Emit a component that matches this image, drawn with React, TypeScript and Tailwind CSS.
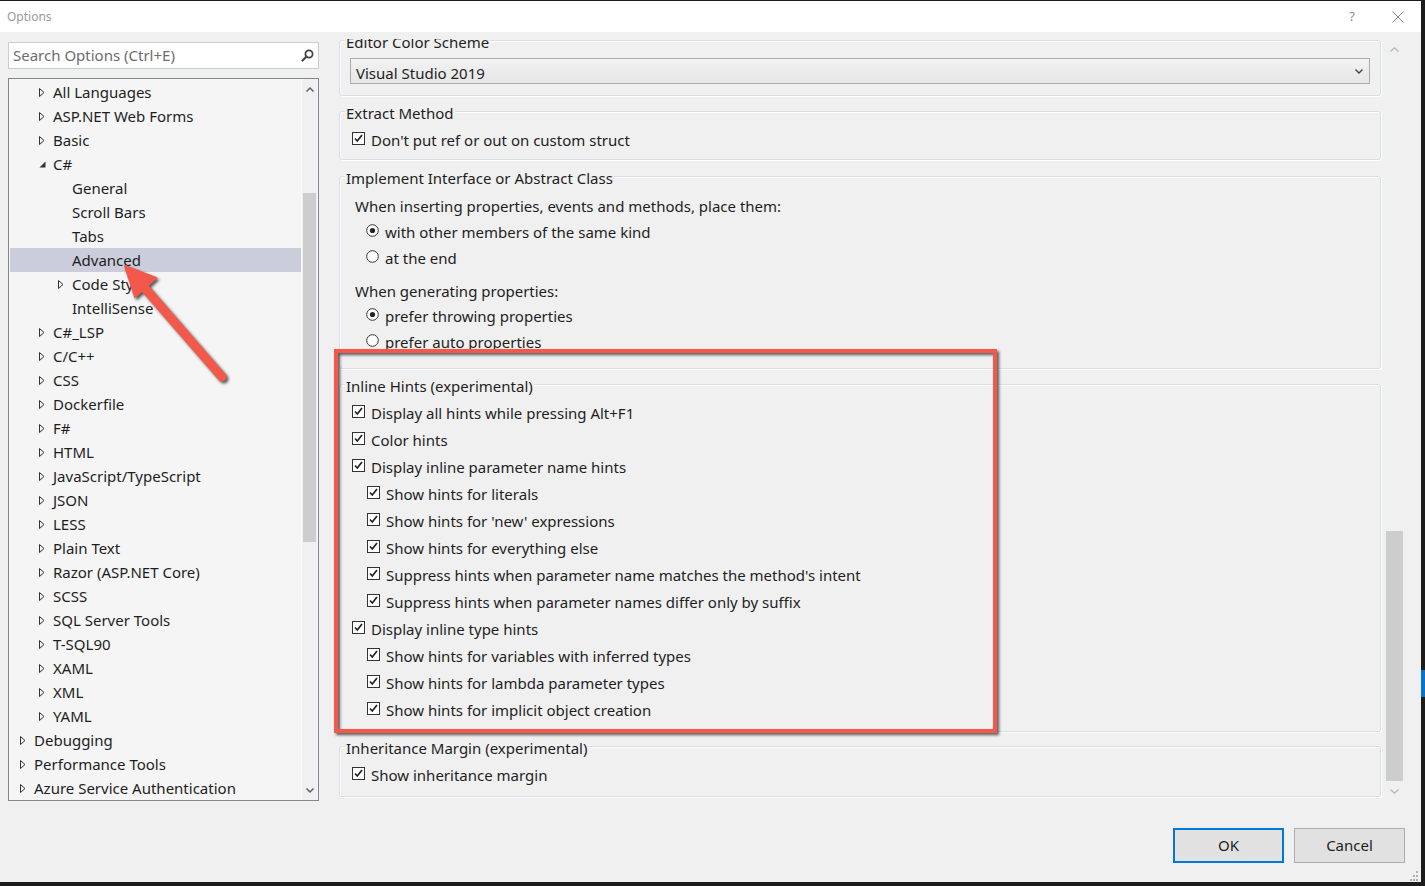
import React from "react";

type Arrow = "c" | "o" | null;

const tree: [string, number, Arrow][] = [
  ["All Languages", 1, "c"],
  ["ASP.NET Web Forms", 1, "c"],
  ["Basic", 1, "c"],
  ["C#", 1, "o"],
  ["General", 2, null],
  ["Scroll Bars", 2, null],
  ["Tabs", 2, null],
  ["Advanced", 2, null],
  ["Code Style", 2, "c"],
  ["IntelliSense", 2, null],
  ["C#_LSP", 1, "c"],
  ["C/C++", 1, "c"],
  ["CSS", 1, "c"],
  ["Dockerfile", 1, "c"],
  ["F#", 1, "c"],
  ["HTML", 1, "c"],
  ["JavaScript/TypeScript", 1, "c"],
  ["JSON", 1, "c"],
  ["LESS", 1, "c"],
  ["Plain Text", 1, "c"],
  ["Razor (ASP.NET Core)", 1, "c"],
  ["SCSS", 1, "c"],
  ["SQL Server Tools", 1, "c"],
  ["T-SQL90", 1, "c"],
  ["XAML", 1, "c"],
  ["XML", 1, "c"],
  ["YAML", 1, "c"],
  ["Debugging", 0, "c"],
  ["Performance Tools", 0, "c"],
  ["Azure Service Authentication", 0, "c"],
];

const indent = ["pl-[10px]", "pl-[29px]", "pl-[48px]"];

const inlineHints: [string, boolean][] = [
  ["Display all hints while pressing Alt+F1", false],
  ["Color hints", false],
  ["Display inline parameter name hints", false],
  ["Show hints for literals", true],
  ["Show hints for 'new' expressions", true],
  ["Show hints for everything else", true],
  ["Suppress hints when parameter name matches the method's intent", true],
  ["Suppress hints when parameter names differ only by suffix", true],
  ["Display inline type hints", false],
  ["Show hints for variables with inferred types", true],
  ["Show hints for lambda parameter types", true],
  ["Show hints for implicit object creation", true],
];

function TreeArrow({ kind }: { kind: Arrow }) {
  if (kind === "c")
    return (
      <svg width="6" height="9" viewBox="0 0 6 9">
        <path d="M0.5 0.5 L5 4.5 L0.5 8.5 Z" fill="none" stroke="#333" strokeWidth="1" />
      </svg>
    );
  if (kind === "o")
    return (
      <svg width="7" height="7" viewBox="0 0 7 7">
        <path d="M6.5 0.5 L6.5 6.5 L0.5 6.5 Z" fill="#333" />
      </svg>
    );
  return null;
}

function Check() {
  return (
    <svg width="13" height="13" viewBox="0 0 13 13" className="shrink-0">
      <rect x="0.5" y="0.5" width="12" height="12" fill="#fff" stroke="#333" />
      <path d="M3 6.5 L5.3 9 L10 3" fill="none" stroke="#222" strokeWidth="1.7" />
    </svg>
  );
}

function Radio({ on }: { on?: boolean }) {
  return (
    <svg width="13" height="13" viewBox="0 0 13 13" className="shrink-0">
      <circle cx="6.5" cy="6.5" r="5.8" fill="#fff" stroke="#333" strokeWidth="1" />
      {on && <circle cx="6.5" cy="6.5" r="2.6" fill="#222" />}
    </svg>
  );
}

// the dialog's text sits a little below its checkbox centre
function Label({ children }: { children: React.ReactNode }) {
  return <span className="pt-[4px] whitespace-nowrap">{children}</span>;
}

function Group({
  title,
  children,
  className = "",
  outer = "",
}: {
  title: string;
  children: React.ReactNode;
  className?: string;
  outer?: string;
}) {
  return (
    <div className={`rounded-[3px] border border-[#d5dfe5] shadow-[inset_1px_1px_0_#fff,1px_1px_0_#fff] ${outer}`}>
      <div className="-mt-[11px] ml-[5px] w-fit h-[20px] pt-[2px] bg-[#f0f0f0] px-[1px] leading-[20px]">{title}</div>
      <div className={className}>{children}</div>
    </div>
  );
}

export default function App() {
  return (
    <div className="relative flex w-[1425px] h-[886px] bg-[#1c1c1c] font-['Noto_Sans','Open_Sans',sans-serif] text-[15px] text-[#1e1e1e]">
      <div className="flex flex-col w-[1421px] h-[881px] mt-px bg-[#f0f0f0]">
        {/* Title bar */}
        <div className="flex items-center h-[31px] bg-white shrink-0">
          <span className="pl-[7px] text-[12px] text-[#9a9a9a]">Options</span>
          <span className="ml-auto mr-[37px] text-[13px] text-[#8a8a8a]">?</span>
          <svg width="12" height="12" viewBox="0 0 12 12" className="mr-[17px]">
            <path d="M0.5 0.5 L11.5 11.5 M11.5 0.5 L0.5 11.5" stroke="#888" strokeWidth="1" />
          </svg>
        </div>

        {/* Main */}
        <div className="flex h-[769px] shrink-0">
          {/* Left column */}
          <div className="pl-[8px] w-[319px] pt-[10px] shrink-0">
            <div className="flex items-center h-[27px] border border-[#c8ccd4] bg-white px-[4px]">
              <span className="text-[#6d6d6d]">Search Options (Ctrl+E)</span>
              <svg width="13" height="13" viewBox="0 0 13 13" className="ml-auto">
                <circle cx="8" cy="5" r="3.6" fill="none" stroke="#444" strokeWidth="1.8" />
                <path d="M5.5 7.5 L1.5 11.5" stroke="#444" strokeWidth="2.2" strokeLinecap="round" />
              </svg>
            </div>
            <div className="mt-[9px] flex h-[723px] border border-[#828790] bg-[#f5f5f5]">
              <div className="w-[292px] pt-px pl-px">
                {tree.map(([label, level, arrow]) => (
                  <div
                    key={label}
                    className={`flex items-center h-6 ${indent[level]} ${label === "Advanced" ? "bg-[#cbcdda]" : ""}`}
                  >
                    <span className="w-[14px] flex items-center">
                      <TreeArrow kind={arrow} />
                    </span>
                    <span className="whitespace-nowrap">{label}</span>
                  </div>
                ))}
              </div>
              <div className="flex flex-col w-[16px] border-l border-[#fafafa] bg-[#f0f0f0]">
                <div className="flex items-center justify-center h-[20px]">
                  <svg width="8" height="5" viewBox="0 0 8 5">
                    <path d="M0.5 4.5 L4 1 L7.5 4.5" fill="none" stroke="#606060" strokeWidth="1.5" />
                  </svg>
                </div>
                <div className="mt-[94px] mx-[1px] h-[349px] bg-[#cdcdcd]" />
                <div className="mt-auto flex items-center justify-center h-[20px]">
                  <svg width="8" height="5" viewBox="0 0 8 5">
                    <path d="M0.5 0.5 L4 4 L7.5 0.5" fill="none" stroke="#606060" strokeWidth="1.5" />
                  </svg>
                </div>
              </div>
            </div>
          </div>

          {/* Right panel (scrolled a little, so the first group title is cut) */}
          <div className="ml-[20px] mt-[7px] w-[1043px] h-[761px] overflow-hidden shrink-0">
            <div className="flex flex-col pr-px">
              <Group title="Editor Color Scheme" outer="mt-[1px]" className="pt-[8px] pb-[11px] px-[10px]">
                <div className="flex items-center h-[26px] border border-[#acacac] bg-gradient-to-b from-[#f2f2f2] to-[#e6e6e6] px-[5px]">
                  <Label>Visual Studio 2019</Label>
                  <svg width="8" height="5" viewBox="0 0 8 5" className="ml-auto mr-[1px]">
                    <path d="M0.5 0.5 L4 4 L7.5 0.5" fill="none" stroke="#444" strokeWidth="1.4" />
                  </svg>
                </div>
              </Group>

              <Group title="Extract Method" outer="mt-[15px]" className="pt-[4px] pb-[7px]">
                <div className="flex items-center gap-[6px] h-[27px] pl-[12px]">
                  <Check />
                  <Label>Don't put ref or out on custom struct</Label>
                </div>
              </Group>

              <Group title="Implement Interface or Abstract Class" outer="mt-[16px]" className="pt-[6px] pb-[15px]">
                <div className="flex items-center h-[25px] pl-[15px]">
                  <Label>When inserting properties, events and methods, place them:</Label>
                </div>
                <div className="flex items-center gap-[6px] h-[26px] pl-[26px]">
                  <Radio on />
                  <Label>with other members of the same kind</Label>
                </div>
                <div className="flex items-center gap-[6px] h-[26px] pl-[26px]">
                  <Radio />
                  <Label>at the end</Label>
                </div>
                <div className="mt-[8px] flex items-center h-[24px] pl-[15px]">
                  <Label>When generating properties:</Label>
                </div>
                <div className="flex items-center gap-[6px] h-[26px] pl-[26px]">
                  <Radio on />
                  <Label>prefer throwing properties</Label>
                </div>
                <div className="flex items-center gap-[6px] h-[26px] pl-[26px]">
                  <Radio />
                  <Label>prefer auto properties</Label>
                </div>
              </Group>

              <Group title="Inline Hints (experimental)" outer="mt-[15px]" className="pt-[4px] pb-[9px]">
                {inlineHints.map(([label, sub]) => (
                  <div
                    key={label}
                    className={`flex items-center gap-[6px] h-[27px] ${sub ? "pl-[27px]" : "pl-[12px]"}`}
                  >
                    <Check />
                    <Label>{label}</Label>
                  </div>
                ))}
              </Group>

              <Group title="Inheritance Margin (experimental)" outer="mt-[14px]" className="pt-[4px] pb-[9px]">
                <div className="flex items-center gap-[6px] h-[27px] pl-[12px]">
                  <Check />
                  <Label>Show inheritance margin</Label>
                </div>
              </Group>
            </div>
          </div>

          {/* Right scrollbar */}
          <div className="ml-[4px] mt-[2px] flex flex-col w-[17px]">
            <div className="flex items-center justify-center h-[32px]">
              <svg width="9" height="5" viewBox="0 0 9 5">
                <path d="M0.5 4.5 L4.5 0.8 L8.5 4.5" fill="none" stroke="#b5b5b5" strokeWidth="1.2" />
              </svg>
            </div>
            <div className="mt-[465px] h-[252px] bg-[#cdcdcd]" />
            <div className="flex items-center justify-center h-[20px]">
              <svg width="9" height="5" viewBox="0 0 9 5">
                <path d="M0.5 0.5 L4.5 4.2 L8.5 0.5" fill="none" stroke="#b5b5b5" strokeWidth="1.2" />
              </svg>
            </div>
          </div>
        </div>

        {/* Buttons */}
        <div className="flex justify-end gap-[10px] mt-[27px] pr-[16px]">
          <button className="w-[111px] h-[35px] border-2 border-[#0078d7] bg-[#e1e1e1]">OK</button>
          <button className="w-[111px] h-[35px] border border-[#adadad] bg-[#e1e1e1]">Cancel</button>
        </div>
        <div className="flex flex-1 items-end justify-end pr-[3px] pb-px">
          <svg width="10" height="10" viewBox="0 0 10 10">
            <g fill="#b0b0b0">
              <rect x="8" y="0" width="2" height="2" />
              <rect x="5" y="4" width="2" height="2" />
              <rect x="8" y="4" width="2" height="2" />
              <rect x="2" y="8" width="2" height="2" />
              <rect x="5" y="8" width="2" height="2" />
              <rect x="8" y="8" width="2" height="2" />
            </g>
          </svg>
        </div>
      </div>

      {/* Dark window edge with a tab peeking in */}
      <div className="w-[4px]">
        <div className="mt-[670px] h-[27px] bg-[#0a74c8]" />
      </div>

      {/* Red annotation box */}
      <div className="absolute left-[334px] top-[349px] w-[663px] h-[384px] border-4 border-[#f3594b] [filter:drop-shadow(2px_2px_1.5px_rgba(0,0,0,0.65))]" />

      {/* Red annotation arrow */}
      <svg
        className="absolute left-[110px] top-[255px] [filter:drop-shadow(2px_2px_1.5px_rgba(0,0,0,0.65))]"
        width="130"
        height="140"
        viewBox="110 255 130 140"
      >
        <path d="M222 377 L143 286" stroke="#f3594b" strokeWidth="9" strokeLinecap="round" />
        <path d="M125 266 L156 278 L135 297 Z" fill="#f3594b" stroke="#f3594b" strokeWidth="2" strokeLinejoin="round" />
      </svg>
    </div>
  );
}
